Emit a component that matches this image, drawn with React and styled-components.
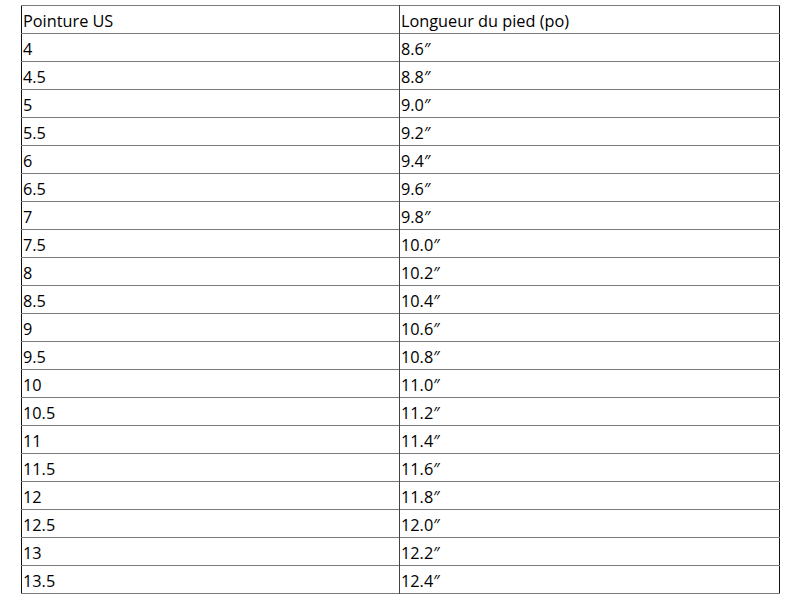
import React from "react";
import styled, { createGlobalStyle } from "styled-components";

const rows = [
  ["4", "8.6″"],
  ["4.5", "8.8″"],
  ["5", "9.0″"],
  ["5.5", "9.2″"],
  ["6", "9.4″"],
  ["6.5", "9.6″"],
  ["7", "9.8″"],
  ["7.5", "10.0″"],
  ["8", "10.2″"],
  ["8.5", "10.4″"],
  ["9", "10.6″"],
  ["9.5", "10.8″"],
  ["10", "11.0″"],
  ["10.5", "11.2″"],
  ["11", "11.4″"],
  ["11.5", "11.6″"],
  ["12", "11.8″"],
  ["12.5", "12.0″"],
  ["13", "12.2″"],
  ["13.5", "12.4″"],
];

const Global = createGlobalStyle`
  body {
    margin: 0;
    background: #ffffff;
    font-family: "Open Sans", "Noto Sans", Arial, sans-serif;
  }
`;

const Page = styled.div`
  padding: 5px 0 0 21px;
`;

const Table = styled.table`
  border-collapse: collapse;
  width: 758px;
  table-layout: fixed;
  border-left: 1px solid #111;
  border-right: 1px solid #111;
`;

const Row = styled.tr`
  height: 28px;
  border-top: 1px solid #7a7a7a;
  border-bottom: 1px solid #7a7a7a;
`;

const Cell = styled.td`
  padding: 3px 0 0 1px;
  font-size: 16.3px;
  color: #000;
  line-height: 24px;
  vertical-align: middle;
  white-space: nowrap;
  & + & {
    border-left: 1px solid #444;
  }
`;

const Col = styled.col`
  width: ${(p) => p.$w}px;
`;

export default function App() {
  return (
    <Page>
      <Global />
      <Table>
        <colgroup>
          <Col $w={378} />
          <Col $w={380} />
        </colgroup>
        <tbody>
          <Row>
            <Cell>Pointure US</Cell>
            <Cell>Longueur du pied (po)</Cell>
          </Row>
          {rows.map(([size, len]) => (
            <Row key={size}>
              <Cell>{size}</Cell>
              <Cell>{len}</Cell>
            </Row>
          ))}
        </tbody>
      </Table>
    </Page>
  );
}
